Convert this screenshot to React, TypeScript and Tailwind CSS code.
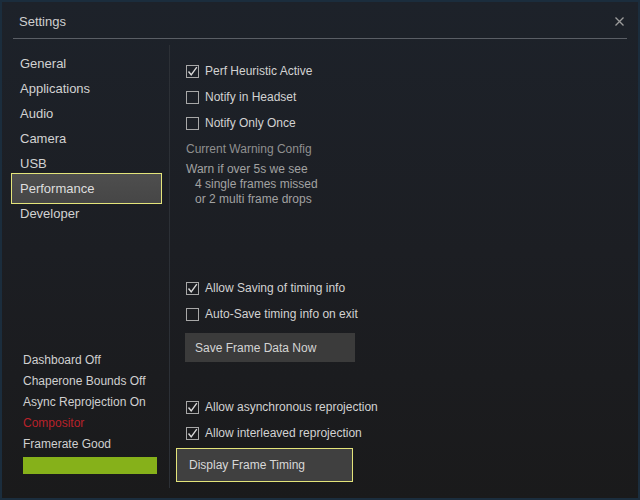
import React from "react";

const font = { fontFamily: '"Liberation Sans", Arial, sans-serif' };

function Check({ checked, label }: { checked?: boolean; label: string }) {
  return (
    <div className="h-[26px] flex items-center">
      <div className="w-[13px] h-[13px] border border-[#a8a8a8] flex items-center justify-center">
        {checked && (
          <svg width="11" height="11" viewBox="0 0 11 11">
            <path d="M1.5 5.5 L4.2 8.8 L9.8 1.2" fill="none" stroke="#d8d8d8" strokeWidth="1.4" />
          </svg>
        )}
      </div>
      <span className="ml-[6px] text-[12px] text-[#d2d2d2]">{label}</span>
    </div>
  );
}

export default function App() {
  const nav = ["General", "Applications", "Audio", "Camera", "USB", "Performance", "Developer"];
  return (
    <div
      style={font}
      className="w-[640px] h-[500px] flex flex-col bg-gradient-to-b from-[#1d222a] via-[#1c1e23] to-[#1a1a1b] shadow-[inset_0_0_0_2px_#1b2d3d] overflow-hidden"
    >
      <div className="h-[38px] pt-[5px] flex items-center justify-between pl-[19px] pr-[15px]">
        <span className="text-[13px] text-[#cfcfcf]">Settings</span>
        <svg width="9" height="9" viewBox="0 0 9 9" className="mr-[1px]">
          <path d="M0.5 0.5 L8.5 8.5 M8.5 0.5 L0.5 8.5" stroke="#9c9c9c" strokeWidth="1.3" />
        </svg>
      </div>
      <div className="h-px mx-[13px] bg-[#5a5e65]" />
      <div className="flex-1 flex">
        <div className="w-[169px] flex flex-col">
          <div className="pt-[12px] flex flex-col">
            {nav.map((n) =>
              n === "Performance" ? (
                <div
                  key={n}
                  className="h-[31px] -my-[3px] ml-[11px] w-[151px] border border-[#e4e47a] bg-gradient-to-b from-[#4e4e4e] to-[#464646] pl-[8px] flex items-center text-[13px] text-[#dedede]"
                >
                  {n}
                </div>
              ) : (
                <div
                  key={n}
                  className="h-[25px] ml-[11px] w-[151px] border border-transparent pl-[8px] flex items-center text-[13px] text-[#d2d2d2]"
                >
                  {n}
                </div>
              )
            )}
          </div>
          <div className="mt-auto pl-[23px] pb-[26px] text-[12px] text-[#d0d0d0]">
            <div className="h-[21px] flex items-center">Dashboard Off</div>
            <div className="h-[21px] flex items-center">Chaperone Bounds Off</div>
            <div className="h-[21px] flex items-center">Async Reprojection On</div>
            <div className="h-[21px] flex items-center text-[#b8222a]">Compositor</div>
            <div className="h-[21px] flex items-center">Framerate Good</div>
            <div className="mt-[3px] h-[17px] w-[134px] bg-[#86b11a]" />
          </div>
        </div>
        <div className="w-px bg-[#2c3036] mt-[6px] mb-[12px]" />
        <div className="flex-1 pl-[16px] pt-[19px] flex flex-col">
          <Check checked label="Perf Heuristic Active" />
          <Check label="Notify in Headset" />
          <Check label="Notify Only Once" />
          <div className="h-[26px] flex items-center text-[12px] text-[#8f8f8f]">Current Warning Config</div>
          <div className="text-[12px] leading-[15px] text-[#a2a2a2]">
            <div>Warn if over 5s we see</div>
            <div className="pl-[9px]">4 single frames missed</div>
            <div className="pl-[9px]">or 2 multi frame drops</div>
          </div>
          <div className="mt-[68px]">
            <Check checked label="Allow Saving of timing info" />
            <Check label="Auto-Save timing info on exit" />
          </div>
          <div className="mt-[6px] -ml-px w-[170px] h-[29px] bg-[#3b3b3b] pl-[10px] flex items-center text-[12px] text-[#d4d4d4]">
            Save Frame Data Now
          </div>
          <div className="mt-[32px]">
            <Check checked label="Allow asynchronous reprojection" />
            <Check checked label="Allow interleaved reprojection" />
          </div>
          <div className="mt-[2px] -ml-[10px] w-[177px] h-[34px] border border-[#e4e47a] bg-[#404040] pl-[12px] flex items-center text-[12px] text-[#d8d8d8]">
            Display Frame Timing
          </div>
        </div>
      </div>
    </div>
  );
}
